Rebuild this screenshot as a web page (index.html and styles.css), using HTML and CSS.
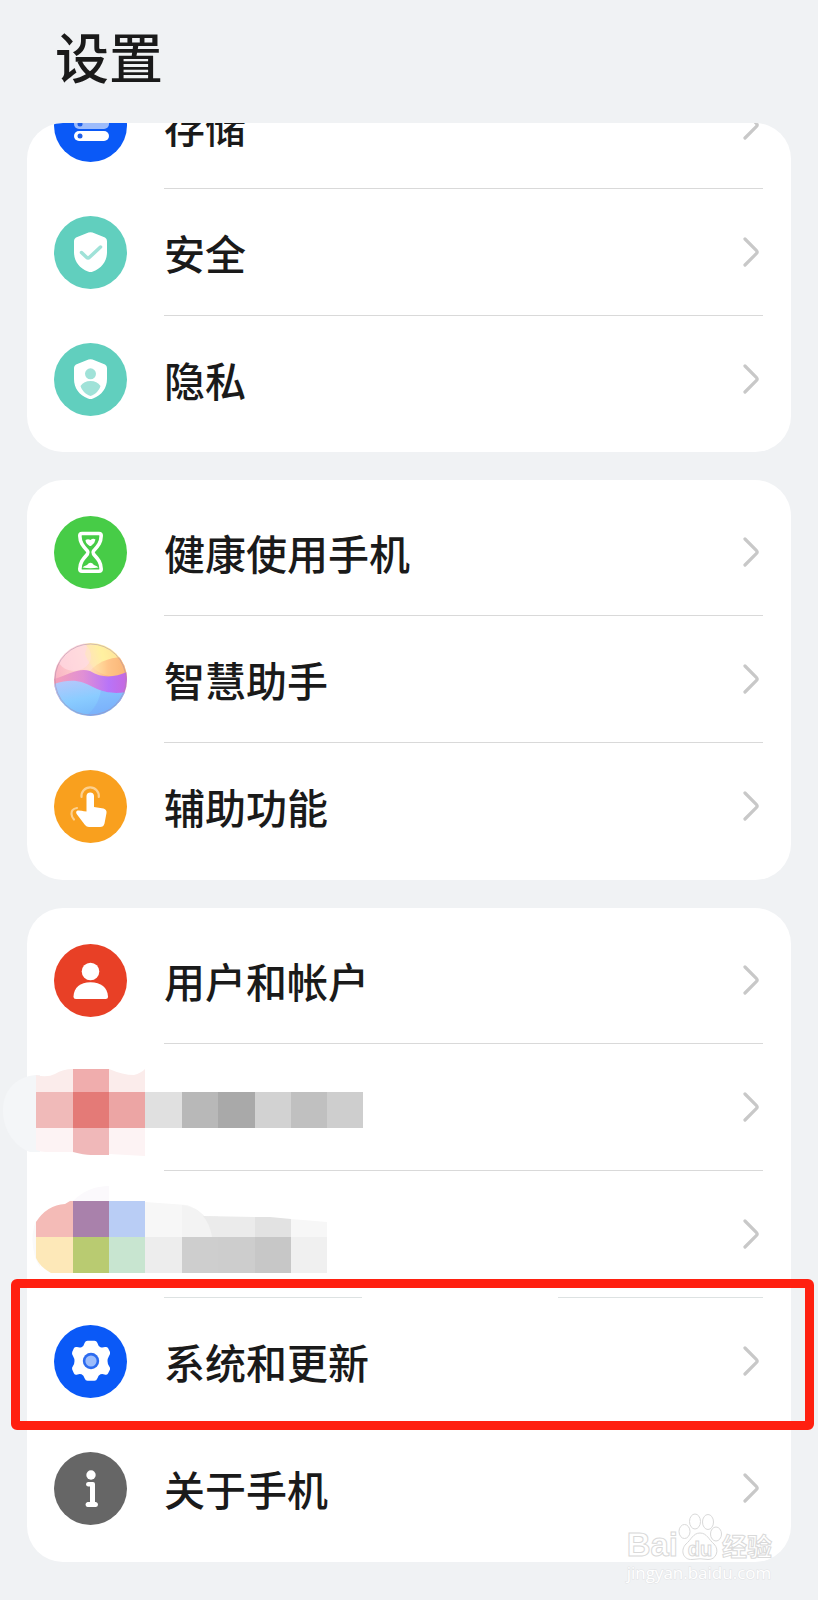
FILE: index.html
```html
<!DOCTYPE html>
<html lang="zh-CN">
<head>
<meta charset="UTF-8">
<title>设置</title>
<meta name="viewport" content="width=device-width, initial-scale=1.0">
<link rel="stylesheet" href="styles.css">
</head>
<body>

<svg class="defs" width="0" height="0" aria-hidden="true">
<symbol id="chevron" viewBox="0 0 16 30"><path d="M2 2L13.300 13.300Q15 15 13.300 16.700L2 28" fill="none" stroke="#c8c8c8" stroke-width="3.200" stroke-linecap="round"/></symbol>
<symbol id="shield" viewBox="0 0 73 73"><path d="M34.500 16.600Q36.500 15.700 38.500 16.600L51 21.500Q53 22.500 53 25V36C53 45 48 52 39 55.500Q36.500 56.700 34 55.500C25 52 20 45 20 36V25Q20 22.500 22 21.500Z" fill="#fff"/></symbol>
</svg>

<header>
<h1>设置</h1>
</header>

<main>

<ul class="card scrolled">
<li><a class="row" href="#storage">
<svg class="icon" viewBox="0 0 73 73">
<circle cx="36.500" cy="36.500" r="36.500" fill="#0a59f7"/>
<rect x="20" y="18" width="35" height="10" rx="5" fill="#fff"/>
<rect x="20" y="30" width="35" height="10" rx="5" fill="#9dbcfb"/>
<rect x="20" y="42" width="35" height="10" rx="5" fill="#fff"/>
<circle cx="26" cy="35" r="2.500" fill="#1f5fe8"/>
<circle cx="26" cy="47" r="2.500" fill="#1f5fe8"/>
</svg>
<span class="body"><span class="label">存储</span><svg class="chevron"><use href="#chevron"/></svg></span>
</a></li>
<li><a class="row" href="#security">
<svg class="icon" viewBox="0 0 73 73">
<circle cx="36.500" cy="36.500" r="36.500" fill="#61cfbe"/>
<use href="#shield"/>
<path d="M27.500 36.500L32.500 41.300Q34 42.700 35.500 41.300L46.500 31" fill="none" stroke="#a0e2d8" stroke-width="3.500" stroke-linecap="round"/>
</svg>
<span class="body"><span class="label">安全</span><svg class="chevron"><use href="#chevron"/></svg></span>
</a></li>
<li><a class="row" href="#privacy">
<svg class="icon" viewBox="0 0 73 73">
<circle cx="36.500" cy="36.500" r="36.500" fill="#61cfbe"/>
<use href="#shield"/>
<circle cx="36.500" cy="30.800" r="5.500" fill="#a0e2d8"/>
<path d="M26.500 43C29 39.500 32 38 36.500 38S44 39.500 46.500 43C45 47.500 42 51 36.500 53C31 51 28 47.500 26.500 43Z" fill="#a0e2d8"/>
</svg>
<span class="body"><span class="label">隐私</span><svg class="chevron"><use href="#chevron"/></svg></span>
</a></li>
</ul>

<ul class="card">
<li><a class="row" href="#balance">
<svg class="icon" viewBox="0 0 73 73">
<circle cx="36.500" cy="36.500" r="36.500" fill="#47cc47"/>
<path d="M28 17.500H45Q47.200 17.500 47.200 19.700C47 27 44 30 39.500 35Q38.500 36.500 39.500 38C44 43 47 46 47.200 53Q47.200 55.200 45 55.200H28Q25.800 55.200 25.800 53C26 46 29 43 33.500 38Q34.500 36.500 33.500 35C29 30 26 27 25.800 19.700Q25.800 17.500 28 17.500Z" fill="none" stroke="#fff" stroke-width="3.600"/>
<path d="M31.500 24Q34 22.500 36.500 24Q39 22 41.500 23.500Q41 27 37.500 29.500Q36.500 30.500 35 29.500Q31.500 27 31.500 24Z" fill="#fff"/>
<path d="M28.500 51.500Q29.500 50 33 49Q36.500 44.500 40 49Q43.500 50 44.500 51.500Q36.500 52.800 28.500 51.500Z" fill="#fff"/>
</svg>
<span class="body"><span class="label">健康使用手机</span><svg class="chevron"><use href="#chevron"/></svg></span>
</a></li>
<li><a class="row" href="#assistant">
<svg class="icon" viewBox="0 0 73 73">
<defs>
<clipPath id="orb"><circle cx="36.500" cy="36.500" r="36.500"/></clipPath>
<linearGradient id="orbTop" x1="0" y1=".5" x2="1" y2=".2"><stop offset="0" stop-color="#f9b1c4"/><stop offset=".45" stop-color="#ffd9cf"/><stop offset=".7" stop-color="#fff0a0"/><stop offset="1" stop-color="#ffd794"/></linearGradient>
<linearGradient id="orbOrange" x1="0" y1="0" x2="1" y2="0"><stop offset="0" stop-color="#ffc69b" stop-opacity=".2"/><stop offset=".5" stop-color="#ffb17e"/><stop offset="1" stop-color="#f79a62"/></linearGradient>
<linearGradient id="orbPurple" x1="0" y1="0" x2="1" y2="0"><stop offset="0" stop-color="#f4a0b8"/><stop offset=".4" stop-color="#e08fd5"/><stop offset=".75" stop-color="#b874f8"/><stop offset="1" stop-color="#c668df"/></linearGradient>
<linearGradient id="orbBlue" x1=".2" y1="0" x2=".6" y2="1"><stop offset="0" stop-color="#b3c8fb"/><stop offset=".5" stop-color="#8accff"/><stop offset="1" stop-color="#78b8fa"/></linearGradient>
</defs>
<g clip-path="url(#orb)">
<rect width="73" height="73" fill="url(#orbTop)"/>
<ellipse cx="20" cy="13" rx="17" ry="15" fill="#ffdce4" opacity=".7"/>
<path d="M35 29C46 16 60 14 73 14V36H35Z" fill="url(#orbOrange)"/>
<path d="M31 11C38 29 53 38 73 31V8L50 0H34Z" fill="#fff2a2" opacity=".3"/>
<path d="M0 36C14 32 25 24 36 28C49 36 61 34 73 29V60H0Z" fill="url(#orbPurple)"/>
<path d="M0 41C18 35 28 38 39 44C51 50 60 51 73 49V73H0Z" fill="url(#orbBlue)"/>
<path d="M47 47C45 58 41 66 32 73H73V49C61 51 54 50 47 47Z" fill="#799ffb" opacity=".3"/>
</g>
<circle cx="36.500" cy="36.500" r="35.500" fill="none" stroke="#a78aa9" stroke-opacity=".5"/>
</svg>
<span class="body"><span class="label">智慧助手</span><svg class="chevron"><use href="#chevron"/></svg></span>
</a></li>
<li><a class="row" href="#accessibility">
<svg class="icon" viewBox="0 0 73 73">
<circle cx="36.500" cy="36.500" r="36.500" fill="#f9a01e"/>
<path d="M27.500 27A8.700 8.700 0 1 1 44.800 27" fill="none" stroke="#fcd08f" stroke-width="2.200" stroke-linecap="round"/>
<path d="M23 38Q17 39 17.500 44Q17.700 47 20 49.500" fill="none" stroke="#fcd08f" stroke-width="2.200" stroke-linecap="round"/>
<path d="M32.500 25.800A3.800 3.800 0 0 1 40 25.800V37L49.500 38.500Q53 39.500 52.500 43L50.500 53.500Q49.700 57 46 57H35Q32.500 57 31 55L23 44.500Q21 41.500 23.500 40.500Q25 40 32.500 41.500Z" fill="#fff"/>
</svg>
<span class="body"><span class="label">辅助功能</span><svg class="chevron"><use href="#chevron"/></svg></span>
</a></li>
</ul>

<ul class="card">
<li><a class="row" href="#accounts">
<svg class="icon" viewBox="0 0 73 73">
<circle cx="36.500" cy="36.500" r="36.500" fill="#e84026"/>
<circle cx="36.500" cy="27.500" r="8.800" fill="#fff"/>
<path d="M19.500 52.500C20 43.500 26 38.200 36.500 38.200S53.500 43.500 54 52.500Q54 55 51.500 55H22Q19.500 55 19.500 52.500Z" fill="#fff"/>
</svg>
<span class="body"><span class="label">用户和帐户</span><svg class="chevron"><use href="#chevron"/></svg></span>
</a></li>
<li><a class="row" href="#hidden-1">
<span class="icon"></span>
<span class="body"><svg class="chevron"><use href="#chevron"/></svg></span>
<svg class="mosaic" viewBox="0 0 380 127">
<path d="M36 31C14 33 3 48 3 66C3 88 16 103 30 108H40V31Z" fill="#f4f6f8"/>
<path d="M36 31Q47 34 55 30Q63 25 73 25V48H36ZM109 25Q123 31 134 31Q141 29 145 25V48H109Z" fill="#fbeceb"/>
<path d="M36 84H73V108H46Q41 108 36 106ZM109 84H145V112L109 110Z" fill="#fdf3f4"/>
<path d="M73 25H109V48H73Z" fill="#f0adad"/>
<path d="M73 84H109V111H91Q84 111 73 108Z" fill="#f0b8b9"/>
<rect x="36" y="48" width="37" height="36" fill="#f0bab9"/>
<rect x="73" y="48" width="36" height="36" fill="#e47a77"/>
<rect x="109" y="48" width="36" height="36" fill="#eca5a4"/>
<rect x="145" y="48" width="37" height="36" fill="#e0e0e0"/>
<rect x="182" y="48" width="36" height="36" fill="#b8b8b8"/>
<rect x="218" y="48" width="37" height="36" fill="#a9a9a9"/>
<rect x="255" y="48" width="36" height="36" fill="#d2d2d2"/>
<rect x="291" y="48" width="36" height="36" fill="#c0c0c0"/>
<rect x="327" y="48" width="36" height="36" fill="#cecece"/>
</svg>
</a></li>
<li><a class="row broken" href="#hidden-2">
<span class="icon"></span>
<span class="body"><svg class="chevron"><use href="#chevron"/></svg></span>
<svg class="mosaic" viewBox="0 0 380 127">
<path d="M73 30Q88 15 109 15V30Z" fill="#fbf9fc"/>
<path d="M36 50Q31 62 33 76Q35 90 40 96V50Z" fill="#fafafa"/>
<path d="M36 66V51Q47 34 65 33L70 30H73V66Z" fill="#f4bbb7"/>
<rect x="73" y="30" width="36" height="36" fill="#a981ab"/>
<rect x="109" y="30" width="36" height="36" fill="#b9cdf5"/>
<path d="M145 31L187 34Q196 37 203 45H218V66H145Z" fill="#f7f7f7"/>
<path d="M182 34Q210 38 212 66H182Z" fill="#f3f3f3"/>
<path d="M203 45L255 46V66H212Q210 53 203 45Z" fill="#ebebeb"/>
<path d="M255 46H270L291 48V66H255Z" fill="#e2e2e2"/>
<path d="M291 48L327 51V66H291Z" fill="#f7f7f7"/>
<path d="M36 66H73V102H51Q40 96 36 87Z" fill="#fde8b8"/>
<rect x="73" y="66" width="36" height="36" fill="#b9cb71"/>
<rect x="109" y="66" width="36" height="36" fill="#c8e5d0"/>
<rect x="145" y="66" width="37" height="36" fill="#ededed"/>
<rect x="182" y="66" width="36" height="36" fill="#cecece"/>
<rect x="218" y="66" width="37" height="36" fill="#cdcdcd"/>
<rect x="255" y="66" width="36" height="36" fill="#c7c7c7"/>
<rect x="291" y="66" width="36" height="36" fill="#f0f0f0"/>
</svg>
</a></li>
<li><a class="row marked" href="#system">
<svg class="icon" viewBox="0 0 73 73">
<circle cx="36.500" cy="36.500" r="36.500" fill="#0a59f7"/>
<path d="M33.500 15.800H40.500Q42.500 15.800 43.300 17.800Q44.300 21.500 46.500 22.300Q49 22.800 51 22Q53 21.500 54 23L56 27Q56.500 29 55 31Q53.500 33.500 53.500 36Q53.500 38.500 55 41Q56.500 42.500 56 44.500L54 48.500Q53 50.300 50.500 49.500Q48.500 48.700 46.500 49.300Q44.300 50.300 43.300 53.500Q42.500 55.800 40.500 55.800H33.500Q31.500 55.800 30.700 53.500Q29.700 50.300 27.500 49.300Q25.500 48.700 23.500 49.500Q21 50.300 20 48.500L18.200 44.500Q17.500 42.500 19 41Q20.500 38.500 20.500 36Q20.500 33.500 19 31Q17.500 29 18.200 27L20 23Q21 21.500 23 22Q25 22.800 27.500 22.300Q29.700 21.500 30.700 17.800Q31.500 15.800 33.500 15.800Z" fill="#fff"/>
<circle cx="37" cy="36" r="8.200" fill="#2c6bef"/>
<circle cx="37" cy="36" r="5.600" fill="#9dbdfb"/>
</svg>
<span class="body"><span class="label">系统和更新</span><svg class="chevron"><use href="#chevron"/></svg></span>
</a></li>
<li><a class="row" href="#about">
<svg class="icon" viewBox="0 0 73 73">
<circle cx="36.500" cy="36.500" r="36.500" fill="#666"/>
<circle cx="37" cy="23" r="4.700" fill="#fff"/>
<path d="M34 30H39Q41 30 41 32V50H42Q44 50.500 44 52.500T42 55H33.500Q31.500 54.500 31.500 52.500T33.500 50H36V34.500H34Q32 34 32 32.300T34 30Z" fill="#fff"/>
</svg>
<span class="body"><span class="label">关于手机</span><svg class="chevron"><use href="#chevron"/></svg></span>
</a></li>
</ul>

</main>

<div class="watermark">
<div class="brand">
<span>Bai</span>
<span class="paw">
<svg viewBox="0 0 44 48">
<g fill="#fff" stroke="#d9d9d9">
<ellipse cx="6.500" cy="18.500" rx="5.500" ry="7"/>
<ellipse cx="17" cy="8.500" rx="5.500" ry="7.500"/>
<ellipse cx="30" cy="9" rx="5.500" ry="7.500"/>
<ellipse cx="38" cy="21" rx="5.500" ry="7"/>
<path d="M22 20C29 20 31 27 36 31C42 37 38 47 30 46.500Q22 45 14 46.500C5 47 2 37 8 31C13 27 15 20 22 20Z"/>
</g>
</svg>
<span class="du">du</span>
</span>
<span class="cn">经验</span>
</div>
<div class="site">jingyan.baidu.com</div>
</div>

</body>
</html>
```
FILE: styles.css
```css
*{box-sizing:border-box}
body{margin:0;position:relative;background:#f0f2f4;color:#1a1a1a;font-family:"Noto Sans CJK SC",sans-serif;min-height:100vh}
.defs{position:absolute}
header{height:123px;padding:17px 55px 0}
h1{margin:0;font-size:54px;line-height:78px;font-weight:500}
main{display:flex;flex-direction:column;gap:28px;padding:0 27px 39px}

.card{margin:0;padding:9px 0 10px;list-style:none;background:#fff;border-radius:36px}
/* list is scrolled, first row sits half under the header */
.scrolled{padding:0 0 9px;overflow:hidden}
.scrolled li:first-child{margin-top:-61px}

.row{position:relative;display:flex;align-items:center;gap:37px;padding:0 28px 0 27px;color:inherit;text-decoration:none}
.icon{flex:none;width:73px;height:73px}
.body{flex:1;display:flex;align-items:center;height:127px;padding-right:4px;border-bottom:1px solid #d9d9d9}
.label{font-size:41px;line-height:60px;font-weight:500}
.chevron{width:16px;height:30px;margin-left:auto}
li:last-child .body,.marked .body{border-bottom-color:transparent}
.broken .body{border-image:linear-gradient(to right,#dde2e2 0 198px,transparent 198px 394px,#dde2e2 394px) 1}

.mosaic{position:absolute;left:-27px;top:0;width:380px;height:127px}
.marked::after{content:"";position:absolute;top:-19px;right:-23px;bottom:-5px;left:-16px;border:9px solid #ff2010;border-radius:6px}

.watermark{position:absolute;right:46px;bottom:16px;color:#fff}
.brand{display:flex;align-items:flex-end;font:700 33px/32px "Liberation Sans","Noto Sans CJK SC",sans-serif;-webkit-text-stroke:1px #d9d9d9}
.paw{position:relative;width:44px;height:48px}
.paw svg{display:block;width:44px;height:48px}
.du{position:absolute;left:0;right:0;bottom:0;font-size:20px;line-height:24px;text-align:center}
.cn{font-size:25px;line-height:28px}
.site{font:17px/24px "Open Sans",sans-serif;-webkit-text-stroke:1px #e2e3e5;paint-order:stroke fill}
```
